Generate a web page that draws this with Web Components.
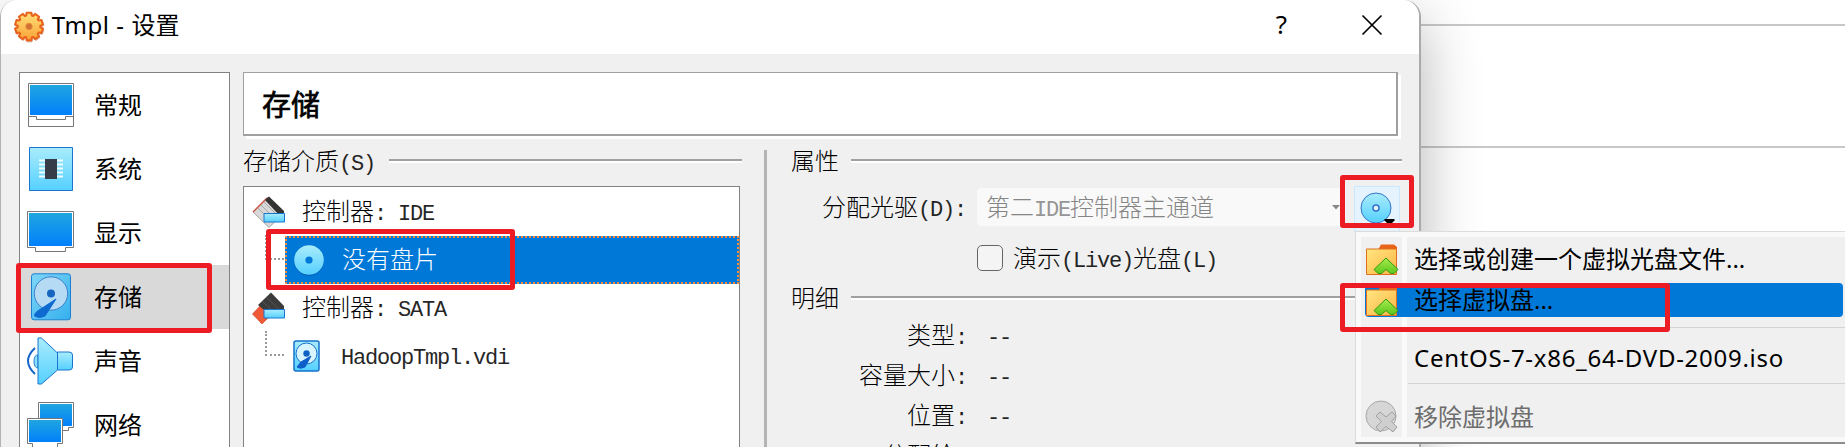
<!DOCTYPE html>
<html lang="zh-CN">
<head>
<meta charset="utf-8">
<title>Tmpl - 设置</title>
<style>
html,body{margin:0;height:447px;overflow:hidden;background:#fff}
body{font-family:"Noto Sans","Noto Sans CJK SC",sans-serif;font-size:24px;color:#000}
</style>
</head>
<body>
<settings-app></settings-app>
<script>
const define=(name,html,after)=>customElements.define(name,class extends HTMLElement{
  connectedCallback(){
    if(this.shadowRoot)return;
    const t=document.createElement('template');
    t.innerHTML=html;
    this.attachShadow({mode:'open'}).append(t.content.cloneNode(true));
    if(after)after(this,this.shadowRoot);
  }
});

const defs=`<defs>
<linearGradient id="scr" x1="0" y1="0" x2="0" y2="1"><stop offset="0" stop-color="#20a5e0"/><stop offset="1" stop-color="#0080fb"/></linearGradient>
<linearGradient id="cy" x1="0" y1="0" x2="0" y2="1"><stop offset="0" stop-color="#a9ecfb"/><stop offset="1" stop-color="#55d0ff"/></linearGradient>
<linearGradient id="hd" x1="0" y1="0" x2="1" y2="1"><stop offset="0" stop-color="#7fd6f6"/><stop offset="1" stop-color="#35b0ee"/></linearGradient>
<linearGradient id="fo" x1="0" y1="0" x2="1" y2="1"><stop offset="0" stop-color="#ffe680"/><stop offset="1" stop-color="#ffb545"/></linearGradient>
<linearGradient id="gr" x1="0" y1="0" x2="0" y2="1"><stop offset="0" stop-color="#a4ec4c"/><stop offset="1" stop-color="#5fc61c"/></linearGradient>
<linearGradient id="ge" x1="0" y1="0" x2="0" y2="1"><stop offset="0" stop-color="#ffe07a"/><stop offset="1" stop-color="#fba136"/></linearGradient>
</defs>`;
const folder=`<path d="M13 7 16 1.5H29L32 4V31H3V6Z" fill="#e8641b"/><path d="M1.500 6H31.500V31.500H1.500Z" fill="url(#fo)" stroke="#e0701c"/><path d="M21 15 33 26.500 29 30.500 25.500 30.500 21 26.500 16.500 30.500H13L9 26.500Z" fill="url(#gr)" stroke="#2f9a12" stroke-linejoin="round"/>`;
/* Outline of a ten-toothed wheel. */
const wheel=(ro,ri)=>{
  let d='';
  for(let k=0;k<10;k++){
    for(const [a,r] of [[-10,ro],[10,ro],[14,ri],[22,ri]]){
      const t=(k*36+a)*Math.PI/180;
      d+=(d?'L':'M')+(r*Math.sin(t)).toFixed(1)+' '+(-r*Math.cos(t)).toFixed(1);
    }
  }
  return d+'Z';
};
const icons={
gear:[32,32,`<g transform="translate(16 15.500)" stroke-linejoin="round"><path d="${wheel(14.500,11.500)}" transform="translate(.500 1)" fill="#b9532a" stroke="#b9532a" opacity=".5"/><path d="${wheel(14,11.300)}" fill="url(#ge)" stroke="#e8621c" stroke-width="2"/><circle r="3.200" fill="#d07238" stroke="#e58a35"/></g>`],
general:[48,46,`<path d="M1.500 1.500H46.500V44.500H1.500Z" fill="#fff" stroke="#777" /><path d="M3 3H45V33H3Z" fill="url(#scr)"/><path d="M1.500 34.500H9.500V37.500H38.500V34.500H46.500" fill="none" stroke="#777"/>`],
system:[48,46,`<path d="M2.500 1.500H45.500V44.500H2.500Z" fill="url(#cy)" stroke="#1a74d0"/><path d="M12 14.500H36M12 18.500H36M12 22.500H36M12 26.500H36M12 30.500H36" stroke="#eefbff" stroke-width="2"/><rect x="18" y="13" width="12" height="20" fill="#373d48"/>`],
display:[48,46,`<path d="M.500 1.500H46.500V37.500H38.500V41.500H8.500V37.500H.500Z" fill="#fff" stroke="#777"/><path d="M2 3H45V36H2Z" fill="url(#scr)"/>`],
storage:[48,48,`<rect x="4.500" y=".800" width="39" height="46" rx="2.500" fill="url(#hd)" stroke="#1c7fd3"/><circle cx="24" cy="20.500" r="16.700" fill="#b4daf4" stroke="#3c80cc"/><circle cx="24" cy="20.500" r="4" fill="#1565c0"/><path d="M29 26 13 36.500Q7 40 7.500 43Q12 46 18 43Z" fill="#0f6ad0" stroke="#0f6ad0" stroke-linejoin="round"/>`],
audio:[48,48,`<path d="M8 11Q-6 24 8 37" fill="none" stroke="#1565c8" stroke-width="2"/><path d="M11 18Q7 18 7 24 7 31 11 31Z" fill="#8de0fb" stroke="#1c7fd3"/><path d="M11 1H14.500L30.500 16V33L14.500 47H11Z" fill="url(#cy)" stroke="#1c74cc" stroke-linejoin="round"/><path d="M30.500 15H42Q45.500 15 45.500 18V30Q45.500 33 42 33H30.500Z" fill="url(#cy)" stroke="#1c74cc"/>`],
network:[48,46,`<path d="M11.500.500H46.500V25.500H41.500V28.500H11.500Z" fill="#fff" stroke="#777"/><path d="M13 2H45V24H13Z" fill="url(#scr)"/><path d="M.500 16.500H35.500V41.500H30.500V46H5.500V41.500H.500Z" fill="#fff" stroke="#777"/><path d="M2 18H34V40H2Z" fill="url(#scr)"/>`],
ide:[33,32,`<path d="M16 1 32 17 17 31.500 1 16Z" fill="#d8d8d8" stroke="#777" stroke-width=".6"/><path d="M15 2 1 16" stroke="#c75542" stroke-width="1.500"/><path d="M12 6 25 19M9 9 22 22M6 12 19 25" stroke="#aaa"/><path d="M13 4 17 .5 32 15V20H28Z" fill="#333"/><path d="M12 17.500H32.500V26H12Z" fill="url(#cy)" stroke="#1a74d0"/>`],
sata:[33,32,`<path d="M8 14 .5 22 10 32 20 22Z" fill="#f15a36" stroke="#c23c20" stroke-width=".6"/><path d="M6 13 19 .5 32 14V20L18 23Z" fill="#3b3b3b"/><path d="M14 5 28 18M10 9 22 20" stroke="#555"/><path d="M12 17.500H32.500V26H12Z" fill="url(#cy)" stroke="#1a74d0"/>`],
disc:[32,32,`<circle cx="16" cy="17" r="14.800" fill="#0059ad"/><circle cx="16" cy="16" r="14.800" fill="url(#cy)"/><circle cx="16" cy="16" r="3.600" fill="#0078d7"/>`],
discbtn:[32,32,`<circle cx="16" cy="16" r="15" fill="url(#cy)" stroke="#3274c8"/><circle cx="16" cy="16" r="3" fill="#e8f4ff" stroke="#3274c8" stroke-width="1.500"/><path d="M24.500 27H34.500V28.500L31.500 31.500H27.500L24.500 28.500Z" fill="#000"/>`],
hdd:[28,32,`<rect x="1" y="1" width="25" height="30" rx="2" fill="url(#cy)" stroke="#1572cc" stroke-width="1.500"/><circle cx="13.500" cy="13.500" r="10.500" fill="#d8f5ff" stroke="#1572cc"/><circle cx="13.500" cy="13.500" r="3.200" fill="#0f62c4"/><path d="M18 16 8 22 4 27Q7 29.500 12 27Z" fill="#0f5fc9" stroke="#0f5fc9" stroke-linejoin="round"/>`],
folder:[34,33,folder],
remove:[34,34,`<circle cx="16" cy="16" r="15" fill="#d6d6d6" stroke="#a8a8a8"/><path d="M15 12 21 17 27 12 31 16 26.500 21.500 32 27 28 32 21 26.500 15 32 11 27 16.500 21.500 11 16Z" fill="#cfcfcf" stroke="#a0a0a0" stroke-linejoin="round"/>`],
close:[20,20,`<path d="M.500.500 19.500 19.500M19.500.500.500 19.500" stroke="#000" stroke-width="1.700"/>`],
drop:[8,5,`<path d="M0 0H8L4 4.500Z" fill="#888"/>`]
};
define('vb-icon','<style>:host{display:block;flex:none}svg{display:block;overflow:visible}</style>',(h,r)=>{
  const [w,ht,b]=icons[h.getAttribute('name')];
  const d=document.createElement('div');
  d.innerHTML=`<svg width="${w}" height="${ht}" viewBox="0 0 ${w} ${ht}">${defs}${b}</svg>`;
  r.append(d);
});

/* Song-style text: every Latin letter takes half the width of a Chinese one. */
define('song-text','<style>:host{display:block;white-space:pre;line-height:28px;height:32px;font-weight:300;font-family:"Noto Sans CJK SC",sans-serif;font-size:24px}.l{font-family:"Liberation Mono",monospace;font-size:22px;letter-spacing:-1.2px;opacity:.85}</style>',(h,r)=>{
  for(const p of h.getAttribute('text').split(/([\x20-\x7e]+)/)){
    if(!p)continue;
    const s=document.createElement('span');
    s.textContent=p;
    if(/^[\x20-\x7e]/.test(p))s.className='l';
    r.append(s);
  }
});

define('title-bar',`<style>:host{display:flex;align-items:center;height:54px;background:#fff;padding:0 37px 0 12px;box-sizing:border-box}
vb-icon:first-child{margin:-6px 8px 0 0}.t{flex:1;white-space:pre;line-height:54px;margin-top:-4px;font-size:24px}.q{font-size:26px;margin:-7px 75px 0 0}.c{margin-top:-4px}</style>
<vb-icon name="gear"></vb-icon><span class="t"><slot></slot></span><span class="q">?</span><vb-icon class="c" name="close"></vb-icon>`);

define('nav-item',`<style>:host{display:flex;height:64px;align-items:center;padding-left:7px}:host([selected]){background:#d9d9d9}
.i{width:48px;margin-right:19px}.t{line-height:30px}</style><div class="i"></div><span class="t"><slot></slot></span>`,(h,r)=>{
  r.querySelector('.i').innerHTML=`<vb-icon name="${h.getAttribute('icon')}"></vb-icon>`;
});
define('nav-list',`<style>:host{display:block;flex:none;box-sizing:border-box;width:211px;height:400px;border:1px solid #828282;background:#fff}</style><slot></slot>`);

define('group-head',`<style>:host{display:flex;height:32px;align-items:center;gap:var(--gap,12px)}i{flex:1;height:2px;background:#a0a0a0;border-bottom:2px solid #fff;margin-top:-3px}</style><slot></slot><i></i>`);

define('tree-row',`<style>:host{display:flex;height:48px;align-items:center;padding-left:8px;gap:17px;box-sizing:border-box}
:host([child]){padding-left:0}
.branch{display:none;flex:none;width:19px;height:25px;margin:-25px 0 0 21px;border-left:2px dotted #999;border-bottom:2px dotted #999;box-sizing:border-box}
:host([child]) .branch{display:block}
.b{display:flex;flex:1;align-items:center;height:48px;box-sizing:border-box;gap:17px}
:host([child]) .b{padding-left:8px;gap:17px;margin-left:-16px}
:host([selected]) .b{background:#0078d7;border:2px dotted #f58a3c;color:#fff;padding-left:6px}</style>
<span class="branch"></span><div class="b"><slot></slot></div>`);
define('storage-tree',`<style>:host{display:block;box-sizing:border-box;width:497px;height:290px;background:#fff;border:1px solid #828282;padding-top:1px}</style><slot></slot>`);

define('detail-row',`<style>:host{display:flex;height:40px;align-items:center;gap:20px}.k{width:176px;display:flex;justify-content:flex-end}</style><div class="k"><slot name="k"></slot></div><slot></slot>`);

define('drive-row',`<style>:host{display:flex;height:40px;align-items:center}
.combo{display:flex;align-items:center;justify-content:space-between;width:366px;height:38px;background:#f9f9f9;border-radius:4px;margin:-2px 0 0 11px;padding:0 3px 0 9px;box-sizing:border-box;color:#858585}
.combo song-text{margin-top:2px}
.btn{width:46px;height:46px;box-sizing:border-box;background:#e5f3ff;border:1px solid #cce8ff;margin:2px 0 0 11px;padding:5px 0 0 5px}
</style><slot></slot><div class="combo"><song-text text="第二IDE控制器主通道"></song-text><vb-icon name="drop"></vb-icon></div><div class="btn"><vb-icon name="discbtn"></vb-icon></div>`);
define('check-row',`<style>:host{display:flex;align-items:center;height:32px;gap:10px}i{width:26px;height:26px;border:1.500px solid #666;border-radius:5px;box-sizing:border-box;background:#f4f4f4;margin-top:-3px}</style><i></i><slot></slot>`);

define('menu-item',`<style>:host{display:flex;align-items:center;height:34px;padding-left:9px;color:#000;white-space:pre}
.i{width:34px;margin-right:15px;flex:none}:host([hot]) .w{background:#0078d7;border-radius:4px}
.w{display:flex;flex:1;align-items:center;height:34px;margin-right:2px}:host([off]){color:#6d6d6d}.t{line-height:34px;letter-spacing:var(--ls,0)}</style>
<div class="w"><div class="i"></div><span class="t"><slot></slot></span></div>`,(h,r)=>{
  const n=h.getAttribute('icon');
  if(n)r.querySelector('.i').innerHTML=`<vb-icon name="${n}"></vb-icon>`;
});
define('popup-menu',`<style>:host{position:absolute;left:1355px;top:231px;width:490px;height:213px;box-sizing:border-box;border:1px solid #dcdcdc;border-right:0;border-bottom:2px solid #8c8c8c;background:linear-gradient(90deg,#f9f9f9 0 5px,#f0f0f0 5px 46px,#fafafa 46px 51px,#f0f0f0 51px);box-shadow:inset 0 5px #f9f9f9,inset 0 -5px #f9f9f9;display:flex;flex-direction:column;padding-top:10px}
hr{margin:0 0 0 52px;border:0;height:1px;background:#d3d3d3;flex:none}</style>
<menu-item icon="folder">选择或创建一个虚拟光盘文件...</menu-item>
<menu-item icon="folder" hot style="margin-top:7px">选择虚拟盘...</menu-item>
<hr style="margin-top:10px">
<menu-item style="margin-top:13px;--ls:.72px">CentOS-7-x86_64-DVD-2009.iso</menu-item>
<hr style="margin-top:8px">
<menu-item icon="remove" off style="margin-top:16px">移除虚拟盘</menu-item>`);

define('red-mark',`<style>:host{position:absolute;box-sizing:border-box;border:5px solid #ed1c24;border-radius:3px}</style>`);

define('settings-dialog',`<style>:host{display:block;position:relative;width:1421px;height:470px;box-sizing:border-box;background:#f0f0f0;border:1px solid #b4b4b4;border-right:2px solid #aaa;border-top:0;border-radius:17px 17px 0 0;box-shadow:0 20px 60px rgba(0,0,0,.3)}
title-bar{border-radius:16px 16px 0 0}
.latin{letter-spacing:.55px}
.body{display:flex;padding:18px 19px 0 18px;gap:13px}
main{flex:1;min-width:0}
h1{margin:0;font:400 29px/61px "Noto Sans CJK SC",sans-serif;-webkit-text-stroke:.7px #000;height:64px;width:1155px;box-sizing:border-box;border:1px solid #a0a0a0;border-right-width:2px;border-bottom-width:2px;background:#fff;padding-left:18px;box-shadow:3px 3px #fff}
.cols{display:flex;margin-top:10px}
.left{flex:none;width:499px;--gap:14px}.left storage-tree{margin-top:8px}
.split{flex:none;width:3px;background:#b4b4b4;margin:4px 24px 0 22px;height:320px}
.right{flex:none;width:611px}
drive-row{margin:10px 0 0 31px}check-row{margin:15px 0 0 186px}.g2{margin-top:8px}.rows{padding-top:1px}
</style>
<title-bar><span class="latin"> Tmpl - </span>设置</title-bar>
<div class="body">
<nav-list>
<nav-item icon="general">常规</nav-item><nav-item icon="system">系统</nav-item><nav-item icon="display">显示</nav-item>
<nav-item icon="storage" selected>存储</nav-item><nav-item icon="audio">声音</nav-item><nav-item icon="network">网络</nav-item>
</nav-list>
<main><h1>存储</h1>
<div class="cols">
<div class="left"><group-head><song-text text="存储介质(S)"></song-text></group-head>
<storage-tree>
<tree-row><vb-icon name="ide"></vb-icon><song-text text="控制器: IDE"></song-text></tree-row>
<tree-row child selected><vb-icon name="disc"></vb-icon><song-text text="没有盘片"></song-text></tree-row>
<tree-row><vb-icon name="sata"></vb-icon><song-text text="控制器: SATA"></song-text></tree-row>
<tree-row child><vb-icon name="hdd"></vb-icon><song-text text="HadoopTmpl.vdi" style="margin-left:3px"></song-text></tree-row>
</storage-tree></div>
<div class="split"></div>
<div class="right"><group-head><song-text text="属性"></song-text></group-head>
<drive-row><song-text text="分配光驱(D):"></song-text></drive-row>
<check-row><song-text text="演示(Live)光盘(L)"></song-text></check-row>
<group-head class="g2"><song-text text="明细"></song-text></group-head>
<div class="rows">
<detail-row><song-text slot="k" text="类型:"></song-text><song-text text="--"></song-text></detail-row>
<detail-row><song-text slot="k" text="容量大小:"></song-text><song-text text="--"></song-text></detail-row>
<detail-row><song-text slot="k" text="位置:"></song-text><song-text text="--"></song-text></detail-row>
<detail-row><song-text slot="k" text="分配给:"></song-text></detail-row>
</div></div></div></main></div>`);

define('settings-app',`<style>:host{display:block;position:relative;width:1845px;height:447px;overflow:hidden;background:linear-gradient(#c8c8c8,#c8c8c8) 1420px 24px/425px 2px no-repeat,linear-gradient(#c8c8c8,#c8c8c8) 1420px 146px/425px 2px no-repeat,#fff}</style>
<settings-dialog></settings-dialog><popup-menu></popup-menu>
<red-mark style="left:16px;top:263px;width:196px;height:70px"></red-mark>
<red-mark style="left:266px;top:229px;width:249px;height:61px"></red-mark>
<red-mark style="left:1340px;top:175px;width:74px;height:53px"></red-mark>
<red-mark style="left:1340px;top:283px;width:330px;height:49px"></red-mark>`);
</script>
</body>
</html>
